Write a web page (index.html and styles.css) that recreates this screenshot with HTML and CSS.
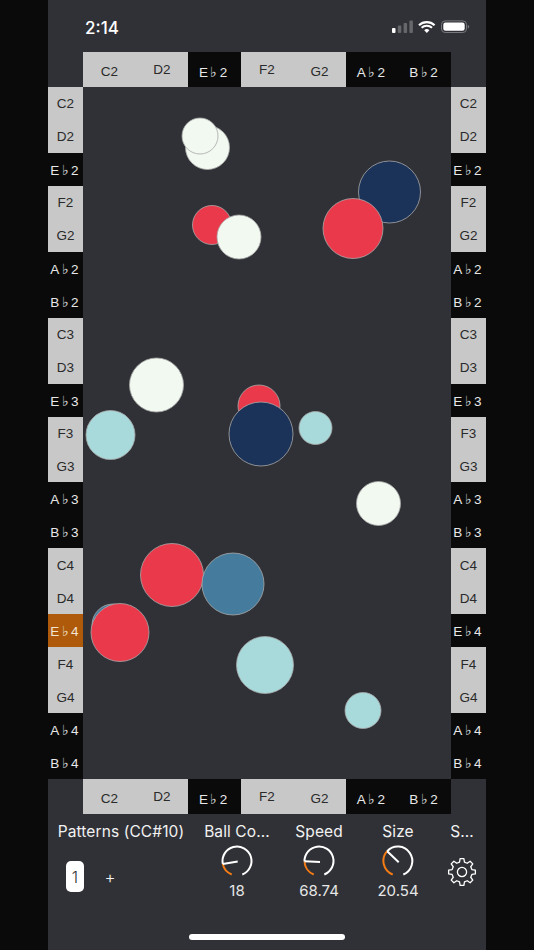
FILE: index.html
```html
<!DOCTYPE html>
<html lang="en">
<head>
<meta charset="utf-8">
<title>Patterns</title>
<link rel="stylesheet" href="styles.css">
</head>
<body>
<main class="app">
  <header class="status">
    <span class="time">2:14</span>
    <svg class="status-icons" width="78" height="16" viewBox="0 0 78 16">
      <rect x="0" y="9" width="3.5" height="5" rx="1" fill="#fff"/>
      <rect x="5.8" y="6.5" width="3.5" height="7.5" rx="1" fill="#66676b"/>
      <rect x="11.6" y="4" width="3.5" height="10" rx="1" fill="#66676b"/>
      <rect x="17.4" y="1.5" width="3.5" height="12.5" rx="1" fill="#66676b"/>
      <path d="M27 6.2a11.4 11.4 0 0 1 15.6 0M29.6 8.8a7.6 7.6 0 0 1 10.4 0" fill="none" stroke="#fff" stroke-width="2.1"/>
      <path d="M32.2 11.2a3.8 3.8 0 0 1 5.2 0L34.8 14z" fill="#fff"/>
      <rect x="49.5" y="1.9" width="25" height="11.6" rx="3.6" fill="none" stroke="#77787b" stroke-width="1"/>
      <rect x="51.3" y="3.6" width="21.4" height="8.2" rx="2.2" fill="#fff"/>
      <path d="M75.8 5.8a2 2 0 0 1 0 3.8z" fill="#77787b"/>
    </svg>
  </header>

  <section class="board">
    <div class="keys-h top">
      <div class="key light low">C2</div><div class="key light">D2</div><div class="key dark low">E♭2</div><div class="key light">F2</div><div class="key light low">G2</div><div class="key dark low">A♭2</div><div class="key dark low">B♭2</div>
    </div>

    <div class="keys-v left">
      <div class="key light">C2</div><div class="key light">D2</div><div class="key dark">E♭2</div><div class="key light">F2</div><div class="key light">G2</div><div class="key dark">A♭2</div><div class="key dark">B♭2</div>
      <div class="key light">C3</div><div class="key light">D3</div><div class="key dark">E♭3</div><div class="key light">F3</div><div class="key light">G3</div><div class="key dark">A♭3</div><div class="key dark">B♭3</div>
      <div class="key light">C4</div><div class="key light">D4</div><div class="key active">E♭4</div><div class="key light">F4</div><div class="key light">G4</div><div class="key dark">A♭4</div><div class="key dark">B♭4</div>
    </div>

    <svg class="field" width="368" height="692" viewBox="83 87 368 692">
      <circle class="ball cream" cx="207.5" cy="147.5" r="22"/>
      <circle class="ball cream" cx="200" cy="136" r="18"/>
      <circle class="ball navy" cx="389.5" cy="192" r="31"/>
      <circle class="ball red" cx="353" cy="228.5" r="30"/>
      <circle class="ball red" cx="212" cy="225" r="19.5"/>
      <circle class="ball cream" cx="239" cy="237" r="22"/>
      <circle class="ball cream" cx="156.500" cy="385" r="27"/>
      <circle class="ball red" cx="259" cy="406" r="21"/>
      <circle class="ball navy" cx="261" cy="434" r="32"/>
      <circle class="ball teal" cx="110.500" cy="435" r="24.500"/>
      <circle class="ball teal" cx="315.500" cy="428" r="16.500"/>
      <circle class="ball cream" cx="378.500" cy="503.500" r="22"/>
      <circle class="ball red" cx="172" cy="575" r="31.500"/>
      <circle class="ball blue" cx="233" cy="584" r="31"/>
      <circle class="ball blue" cx="113" cy="625" r="21"/>
      <circle class="ball red" cx="120" cy="632.500" r="29"/>
      <circle class="ball teal" cx="265" cy="665" r="28.500"/>
      <circle class="ball teal" cx="363" cy="710.500" r="18"/>
    </svg>

    <div class="keys-v right">
      <div class="key light">C2</div><div class="key light">D2</div><div class="key dark">E♭2</div><div class="key light">F2</div><div class="key light">G2</div><div class="key dark">A♭2</div><div class="key dark">B♭2</div>
      <div class="key light">C3</div><div class="key light">D3</div><div class="key dark">E♭3</div><div class="key light">F3</div><div class="key light">G3</div><div class="key dark">A♭3</div><div class="key dark">B♭3</div>
      <div class="key light">C4</div><div class="key light">D4</div><div class="key dark">E♭4</div><div class="key light">F4</div><div class="key light">G4</div><div class="key dark">A♭4</div><div class="key dark">B♭4</div>
    </div>

    <div class="keys-h bottom">
      <div class="key light low">C2</div><div class="key light">D2</div><div class="key dark low">E♭2</div><div class="key light">F2</div><div class="key light low">G2</div><div class="key dark low">A♭2</div><div class="key dark low">B♭2</div>
    </div>
  </section>

  <section class="controls">
    <div class="control">
      <div class="label">Patterns (CC#10)</div>
      <div class="patterns">
        <button class="pattern">1</button>
        <span class="add">+</span>
      </div>
    </div>
    <div class="control">
      <div class="label">Ball Co...</div>
      <svg class="knob" width="34" height="34" viewBox="0 0 34 34">
        <path class="arc-on" d="M11.7 30.500A14.500 14.500 0 0 1 2.800 19.900"/>
        <path class="arc-off" d="M2.800 19.900A14.500 14.500 0 1 1 22.300 30.500"/>
        <path class="needle" d="M2.800 19.900L17.700 17.500"/>
      </svg>
      <div class="value">18</div>
    </div>
    <div class="control">
      <div class="label">Speed</div>
      <svg class="knob" width="34" height="34" viewBox="0 0 34 34">
        <path class="arc-on" d="M11.7 30.500A14.500 14.500 0 0 1 2.500 17.300"/>
        <path class="arc-off" d="M2.500 17.300A14.500 14.500 0 1 1 22.300 30.500"/>
        <path class="needle" d="M2.500 17.300L18 18"/>
      </svg>
      <div class="value">68.74</div>
    </div>
    <div class="control">
      <div class="label">Size</div>
      <svg class="knob" width="34" height="34" viewBox="0 0 34 34">
        <path class="arc-on" d="M11.7 30.500A14.500 14.500 0 0 1 6.200 7.200"/>
        <path class="arc-off" d="M6.200 7.200A14.500 14.500 0 1 1 22.300 30.500"/>
        <path class="needle" d="M6.200 7.200L17.700 18.200"/>
      </svg>
      <div class="value">20.54</div>
    </div>
    <div class="control">
      <div class="label">S...</div>
      <svg class="gear" width="30" height="30" viewBox="-15 -15 30 30">
        <path d="M-2.47-9.9L-1.88-13.37H1.88L2.47-9.9L5.25-8.74L8.12-10.78L10.78-8.12L8.74-5.25L9.9-2.47L13.37-1.88V1.88L9.9 2.47L8.74 5.25L10.78 8.12L8.12 10.78L5.25 8.74L2.47 9.9L1.88 13.37H-1.88L-2.47 9.9L-5.25 8.74L-8.12 10.78L-10.78 8.12L-8.74 5.25L-9.9 2.47L-13.37 1.88V-1.88L-9.9-2.47L-8.74-5.25L-10.78-8.12L-8.12-10.78L-5.25-8.74Z"/>
        <circle r="4.6"/>
      </svg>
    </div>
  </section>

  <div class="home-bar"></div>
</main>
</body>
</html>
```

FILE: styles.css
```css
* { box-sizing: border-box; }

html, body {
  margin: 0;
  height: 950px;
  overflow: hidden;
  background: #0a0a0a;
}

.app {
  width: 438px;
  height: 950px;
  margin: 0 auto;
  background: #303136;
  color: #f2f2f2;
  font-family: Inter, "Liberation Sans", sans-serif;
  display: flex;
  flex-direction: column;
}

.status {
  height: 52px;
  flex: none;
  display: flex;
  justify-content: space-between;
  padding: 18px 16px 0 37px;
}

.time {
  font-size: 17px;
  font-weight: 500;
  line-height: 20px;
  color: #fff;
}

.status-icons {
  margin-top: 1px;
}

.board {
  display: grid;
  grid-template-columns: 35px 368px 35px;
  grid-template-rows: 35px 692px 35px;
  flex: none;
}

.keys-h {
  grid-column: 2;
  display: grid;
  grid-template-columns: repeat(7, 1fr);
}

.top { grid-row: 1; }
.bottom { grid-row: 3; }

.keys-v {
  grid-row: 2;
  display: grid;
  grid-template-rows: repeat(21, 1fr);
}

.left { grid-column: 1; }
.right { grid-column: 3; }

.key {
  display: flex;
  align-items: center;
  justify-content: center;
  padding-top: 1px;
  font-family: "Liberation Sans", Arial, sans-serif;
  font-size: 13.5px;
}

.keys-h .key {
  padding-top: 0;
}

.keys-h .key.low {
  padding-top: 4px;
}

.light {
  background: #c8c8c8;
  color: #2a2a2a;
}

.dark {
  background: #0a0a0a;
  color: #e8e8e8;
  letter-spacing: 2.4px;
}

.active {
  background: #ae5a0a;
  color: #f4e6d4;
  letter-spacing: 2.4px;
}

.field {
  grid-column: 2;
  grid-row: 2;
  display: block;
  background: #303136;
}

.ball {
  stroke: #a8a8a8;
  stroke-width: 0.8;
}
.cream { fill: #f1f9f0; }
.navy { fill: #1b3358; }
.red { fill: #ea394b; }
.teal { fill: #a8dadc; }
.blue { fill: #457b9d; }

.controls {
  display: grid;
  grid-template-columns: 146px 86px 78px 80px 48px;
  padding-top: 9px;
  flex: none;
}

.control {
  display: flex;
  flex-direction: column;
  align-items: center;
}

.label {
  font-size: 15.5px;
  letter-spacing: 0.1px;
  line-height: 18px;
  white-space: nowrap;
}

.patterns {
  align-self: stretch;
  display: flex;
  align-items: center;
  padding: 20px 0 0 18px;
  gap: 18px;
}

.pattern {
  width: 18px;
  height: 31px;
  padding: 0;
  border: 0;
  border-radius: 5px;
  background: #fff;
  color: #303136;
  font-family: inherit;
  font-size: 16px;
  font-weight: 300;
}

.add {
  font-size: 17px;
  font-weight: 300;
  width: 16px;
  text-align: center;
}

.knob {
  margin-top: 3px;
  fill: none;
  stroke-width: 2;
  display: block;
}

.arc-on { stroke: #f57c14; }
.arc-off { stroke: #fff; }
.needle { stroke: #fff; }

.value {
  font-size: 15px;
  line-height: 18px;
  margin-top: 4px;
  color: #e6e6e6;
}

.gear {
  margin-top: 16px;
  fill: none;
  stroke: #fff;
  stroke-width: 1.3;
  stroke-linejoin: round;
}

.home-bar {
  width: 156px;
  height: 6px;
  border-radius: 3px;
  background: #fff;
  margin: 34px auto 0;
  flex: none;
}
```
